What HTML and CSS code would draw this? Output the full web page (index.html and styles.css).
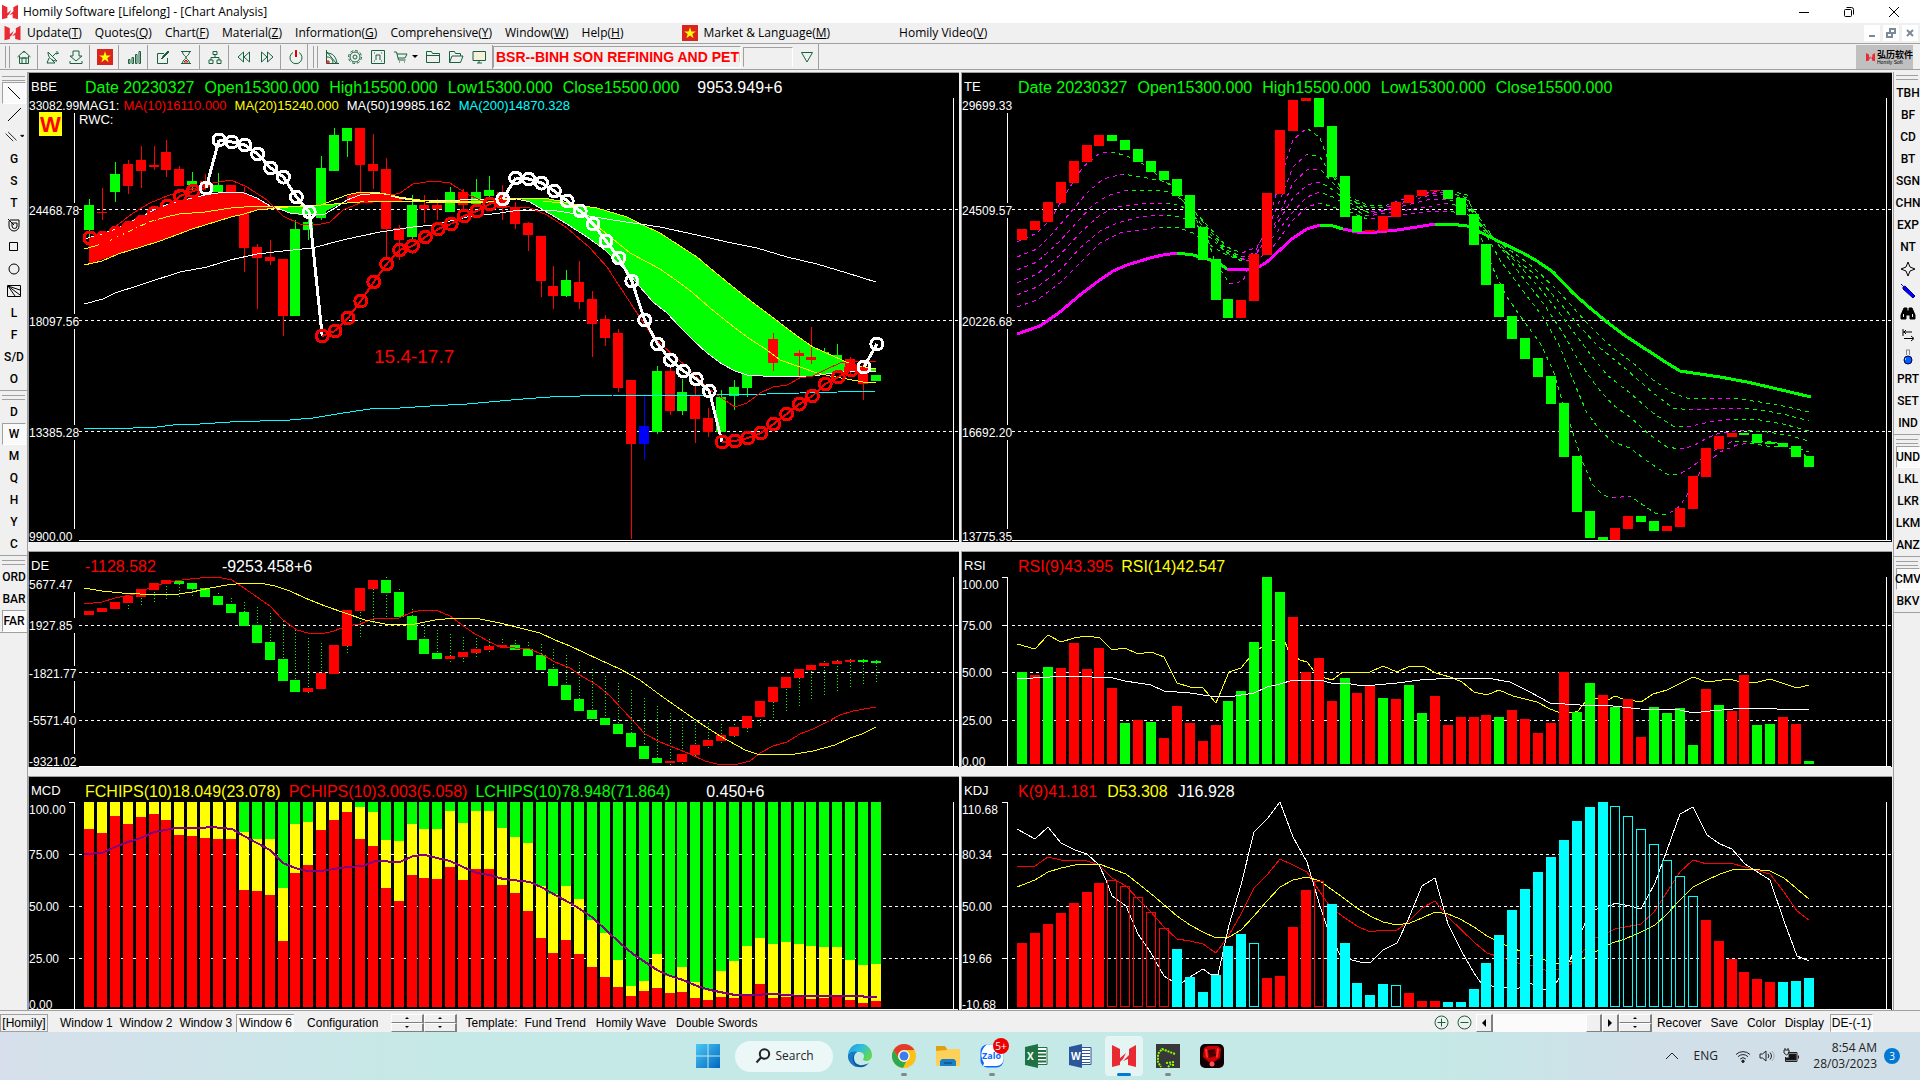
FILE: index.html
```html
<!DOCTYPE html>
<html lang="en">
<head>
<meta charset="utf-8">
<title>Homily Software [Lifelong] - [Chart Analysis]</title>
<link rel="stylesheet" href="styles.css">
</head>
<body>
<svg class="defs" aria-hidden="true">
  <symbol id="logo" viewBox="0 0 24 24"><path fill="#ea2a33" d="M0 1l8 4v9l6-5-3 6-3 3v3l-8 2zM24 1l-7 4v6l-6 6 5-2v6l8 2z"/></symbol>
  <symbol id="flag" viewBox="0 0 16 16"><path fill="#da251d" d="M0 0h16v16H0z"/><path fill="#ff0" d="M8 2.200l1.400 4.200h4.400l-3.500 2.600 1.300 4.200L8 10.600l-3.600 2.600 1.300-4.200L2.200 6.400h4.400z"/></symbol>
</svg>

<header class="titlebar">
  <svg class="title-logo"><use href="#logo"/></svg>
  <h1>Homily Software [Lifelong] - [Chart Analysis]</h1>
  <div class="win-buttons">
    <button aria-label="Minimize"><svg viewBox="0 0 12 12"><path d="M1 6.500h10"/></svg></button>
    <button aria-label="Restore"><svg viewBox="0 0 12 12"><rect x="1.500" y="3.500" width="7" height="7" rx="1"/><path d="M3.500 1.500h5a2 2 0 0 1 2 2v5"/></svg></button>
    <button aria-label="Close"><svg viewBox="0 0 12 12"><path d="M1 1l10 10M11 1L1 11"/></svg></button>
  </div>
</header>

<nav class="menubar">
  <svg class="menu-logo"><use href="#logo"/></svg>
  <button>Update(<u>T</u>)</button>
  <button>Quotes(<u>Q</u>)</button>
  <button>Chart(<u>F</u>)</button>
  <button>Material(<u>Z</u>)</button>
  <button>Information(<u>G</u>)</button>
  <button>Comprehensive(<u>Y</u>)</button>
  <button>Window(<u>W</u>)</button>
  <button>Help(<u>H</u>)</button>
  <button class="market"><svg class="flag"><use href="#flag"/></svg><span>Market &amp; Language(<u>M</u>)</span></button>
  <button class="video">Homily Video(<u>V</u>)</button>
  <div class="mdi-buttons">
    <button aria-label="Minimize chart"><svg viewBox="0 0 10 10"><path d="M2 8h6"/></svg></button>
    <button aria-label="Restore chart"><svg viewBox="0 0 10 10"><path d="M1 5h5v4H1zM4 4V1h5v4H7"/></svg></button>
    <button aria-label="Close chart"><svg viewBox="0 0 10 10"><path d="M2 2l6 6M8 2L2 8"/></svg></button>
  </div>
</nav>

<div class="toolbar">
  <div class="band">
    <i class="grip"></i>
    <button aria-label="Home"><svg viewBox="0 0 16 16"><path d="M1.500 8L8 2l6.500 6M3.500 7v7.500h9V7M6 14V9h4v5M4 9h8M8 2v2"/></svg></button>
    <i class="sep"></i>
    <button aria-label="Receive"><svg viewBox="0 0 16 16"><path d="M3 3c0 6 4 9 9 9zM7 8l4-4M12 2v3M14 4l-3 1M4 9l-2 5h8l-3-3"/></svg></button>
    <button aria-label="Download"><svg viewBox="0 0 16 16"><path d="M5 2h6v5h3l-6 5-6-5h3zM2 12v2.500h12V12"/></svg></button>
    <i class="sep"></i>
    <button aria-label="Vietnam market"><svg class="flag"><use href="#flag"/></svg></button>
    <i class="sep"></i>
    <button aria-label="Volume bars"><svg viewBox="0 0 16 16"><path d="M2.500 10.500h1.500v4H2.500zM6 8.500h1.500v6H6zM9.500 5.500H11v9H9.500zM13 2.500h1.500v12H13z"/></svg></button>
    <i class="sep"></i>
    <button aria-label="Edit"><svg viewBox="0 0 16 16"><path d="M9 4.500H2.500v10h10V9M6 10l8-8M7 10l1-3 5-5 1 1-5 5z"/></svg></button>
    <button aria-label="Wait"><svg viewBox="0 0 16 16"><path d="M3 2.500h10M3 14.500h10M4.500 3c0 3 3.500 4 3.500 5.500S4.500 11 4.500 14M11.500 3c0 3-3.500 4-3.500 5.500s3.500 2.500 3.500 5.500"/><path class="sand" d="M6 13l2-2 2 2z"/></svg></button>
    <i class="sep"></i>
    <button aria-label="Tree"><svg viewBox="0 0 16 16"><path d="M6 2.500h4v3H6zM2 11h4v3.500H2zM10 11h4v3.500h-4zM8 6v3M4 11V8.500h8V11"/></svg></button>
    <i class="sep"></i>
    <button aria-label="Back"><svg viewBox="0 0 16 16"><path d="M7.500 3L2 8l5.500 5zM13.500 3L8 8l5.500 5z"/></svg></button>
    <button aria-label="Forward"><svg viewBox="0 0 16 16"><path d="M2.500 3L8 8l-5.500 5zM8.500 3L14 8l-5.500 5z"/></svg></button>
    <i class="sep"></i>
    <button aria-label="Power"><svg viewBox="0 0 16 16"><path d="M5 3.500a6 6 0 1 0 6 0"/><path class="red" d="M8 1v7"/></svg></button>
  </div>
  <div class="band">
    <i class="grip"></i>
    <button aria-label="Fan lines"><svg viewBox="0 0 16 16"><path d="M2.500 1v13.500H15M3 4c6 0 9 4 10 10M3 8c4 0 6 3 6 6M3 3l9 11"/><path class="sand" d="M3 12h2v2H3z"/></svg></button>
    <button aria-label="Settings"><svg viewBox="0 0 16 16"><circle cx="8" cy="8" r="2"/><circle cx="8" cy="8" r="5"/><circle class="teeth" cx="8" cy="8" r="6.500"/></svg></button>
    <button aria-label="Frame"><svg viewBox="0 0 16 16"><path d="M1.500 1.500h13v13h-13zM6 11V6h4v5M4 4h1M11 4h1M4 12h1M11 12h1"/></svg></button>
    <button class="wide" aria-label="Cart"><svg viewBox="0 0 16 16"><path d="M1 3h2.500l2 8h7M4 5h10l-2 4H5M6 13h1M11 13h1"/></svg><span class="caret"></span></button>
    <button aria-label="Folder"><svg viewBox="0 0 16 16"><path d="M1.500 13.500v-11h5l1 2h7v9zM2 6.500h12"/></svg></button>
    <button aria-label="Open folder"><svg viewBox="0 0 16 16"><path d="M1.500 13.500v-11h5l1 2h5V7M1.500 13.500L4 7h11l-2.500 6.500z"/></svg></button>
    <button aria-label="Monitor"><svg viewBox="0 0 16 16"><path fill="#f6efd9" d="M2 2.500h12.500v9H2zM6 14h5M8 12v2"/></svg></button>
    <i class="sep"></i>
    <input class="symbol" aria-label="Symbol" value="BSR--BINH SON REFINING AND PETROCHEMICAL">
    <input class="code" aria-label="Code">
    <button aria-label="Choose"><svg viewBox="0 0 16 16"><path d="M2.500 3.500h11L8 13z"/></svg></button>
  </div>
  <div class="brand"><svg><use href="#logo"/></svg><span>弘历软件<small>Homily Soft</small></span></div>
</div>

<main class="workspace">
  <aside class="side left">
    <div class="group">
      <i class="hgrip"></i>
      <button class="on" aria-label="Line down"><svg viewBox="0 0 20 20"><path d="M4 4l12 12"/></svg></button>
      <button aria-label="Line up"><svg viewBox="0 0 20 20"><path d="M4 16L17 3"/></svg></button>
      <button aria-label="Parallel lines"><svg viewBox="0 0 24 20"><path d="M2 6l9 9M5 4l10 10"/><path fill="#000" d="M20 8h4l-2 2z"/></svg></button>
      <button>G</button><button>S</button><button>T</button>
      <button aria-label="Spiral"><svg viewBox="0 0 20 20"><path d="M4 4l6 6M6 5h9v6a5 5 0 0 1-10 0V6M8 8h5v3a2.500 2.500 0 0 1-5 0z"/></svg></button>
      <button aria-label="Rectangle"><svg viewBox="0 0 20 20"><path d="M5.500 5.500h8v8h-8z"/></svg></button>
      <button aria-label="Ellipse"><svg viewBox="0 0 20 20"><circle cx="10" cy="10" r="5"/></svg></button>
      <button aria-label="Gann fan"><svg viewBox="0 0 20 20"><path d="M3.500 4.500h13v11h-13zM4 5l12 4M4 5l12 9M4 5l7 10"/></svg></button>
      <button>L</button><button>F</button><button>S/D</button><button>O</button>
    </div>
    <div class="group">
      <i class="hgrip"></i>
      <button>D</button><button class="on">W</button><button>M</button><button>Q</button><button>H</button><button>Y</button><button>C</button>
    </div>
    <div class="group">
      <i class="hgrip"></i>
      <button>ORD</button><button>BAR</button><button class="on">FAR</button>
    </div>
  </aside>

  <div class="charts">
    <section class="panel">
      <svg class="plot" id="bbe" viewBox="29 73 930 469"></svg>
      <div class="head">
        <h2>BBE</h2>
        <p class="legend"><span class="g">Date 20230327</span><span class="g">Open15300.000</span><span class="g">High15500.000</span><span class="g">Low15300.000</span><span class="g">Close15500.000</span><span class="w far">9953.949+6</span></p>
        <p class="sub"><span class="name">MAG1:</span><span class="r">MA(10)16110.000</span><span class="y">MA(20)15240.000</span><span>MA(50)19985.162</span><span class="c">MA(200)14870.328</span></p>
        <p class="sub">RWC:</p>
      </div>
    </section>
    <section class="panel">
      <svg class="plot" id="te" viewBox="962 73 930 469"></svg>
      <div class="head">
        <h2>TE</h2>
        <p class="legend"><span class="g">Date 20230327</span><span class="g">Open15300.000</span><span class="g">High15500.000</span><span class="g">Low15300.000</span><span class="g">Close15500.000</span></p>
      </div>
    </section>
    <section class="panel">
      <svg class="plot" id="de" viewBox="29 552 930 215"></svg>
      <div class="head"><h2>DE</h2><p class="legend"><span class="r">-1128.582</span><span class="w apart">-9253.458+6</span></p></div>
    </section>
    <section class="panel">
      <svg class="plot" id="rsi" viewBox="962 552 930 215"></svg>
      <div class="head"><h2>RSI</h2><p class="legend tight"><span class="r">RSI(9)43.395</span><span class="y">RSI(14)42.547</span></p></div>
    </section>
    <section class="panel">
      <svg class="plot" id="mcd" viewBox="29 777 930 233"></svg>
      <div class="head"><h2>MCD</h2><p class="legend tight"><span class="y">FCHIPS(10)18.049(23.078)</span><span class="r">PCHIPS(10)3.003(5.058)</span><span class="g">LCHIPS(10)78.948(71.864)</span><span class="w wide">0.450+6</span></p></div>
    </section>
    <section class="panel">
      <svg class="plot" id="kdj" viewBox="962 777 930 233"></svg>
      <div class="head"><h2>KDJ</h2><p class="legend"><span class="r">K(9)41.181</span><span class="y">D53.308</span><span class="w">J16.928</span></p></div>
    </section>
  </div>

  <aside class="side right">
    <div class="group">
      <i class="hgrip"></i>
      <button>TBH</button><button>BF</button><button>CD</button><button>BT</button><button>SGN</button><button>CHN</button><button>EXP</button><button>NT</button>
      <button aria-label="Star"><svg viewBox="0 0 20 20"><path d="M10 3l2 5 5 2-5 2-2 5-2-5-5-2 5-2z"/></svg></button>
      <button aria-label="Pencil"><svg viewBox="0 0 20 20"><path fill="#00f" stroke="#000080" d="M5 6l2-1 10 10-2 2L5 8z"/><path stroke="#00f" d="M3 3l3 3"/></svg></button>
      <button aria-label="Find"><svg viewBox="0 0 20 20"><path fill="#000" d="M6 5h3v3h2V5h3l3 7v4h-5v-4H8v4H3v-4z"/><path stroke="#eee" d="M5.500 11v3M14.500 11v3"/></svg></button>
      <button aria-label="Swap"><svg viewBox="0 0 20 20"><path d="M5 4v7M5 7h9M8 5L6 7l2 2M6 13.500h9M13 11l3 2.500L13 16"/></svg></button>
      <button aria-label="Flask"><svg viewBox="0 0 20 20"><path stroke="#888" d="M8 3h4M8.500 3v5M11.500 3v5"/><circle cx="10" cy="13" r="4" fill="#0060ff" stroke="#004"/><path stroke="#9cf" d="M7.500 11v2"/></svg></button>
      <button>PRT</button><button>SET</button><button>IND</button>
    </div>
    <div class="group">
      <i class="hgrip"></i>
      <button class="on">UND</button><button>LKL</button><button>LKR</button><button>LKM</button><button>ANZ</button>
    </div>
    <div class="group">
      <i class="hgrip"></i>
      <button class="on">CMV</button><button>BKV</button>
    </div>
  </aside>
</main>

<footer class="status">
  <button class="boxed">[Homily]</button>
  <div class="windows">
    <button>Window 1</button><button>Window 2</button><button>Window 3</button><button class="on">Window 6</button>
  </div>
  <button class="config">Configuration</button>
  <div class="spin"><button aria-label="Up"><i class="up"></i></button><button aria-label="Down"><i class="down"></i></button></div>
  <div class="spin"><button aria-label="Up"><i class="up"></i></button><button aria-label="Down"><i class="down"></i></button></div>
  <span class="template">Template:</span>
  <div class="templates"><button>Fund Trend</button><button>Homily Wave</button><button>Double Swords</button></div>
  <div class="status-right">
    <button class="round" aria-label="Zoom in"><svg viewBox="0 0 15 15"><circle cx="7.500" cy="7.500" r="6.500"/><path d="M3.500 7.500h8M7.500 3.500v8"/></svg></button>
    <button class="round" aria-label="Zoom out"><svg viewBox="0 0 15 15"><circle cx="7.500" cy="7.500" r="6.500"/><path d="M3.500 7.500h8"/></svg></button>
    <div class="scroll">
      <button aria-label="Scroll left"><i class="prev"></i></button><div class="track"></div><div class="thumb"></div><button aria-label="Scroll right"><i class="next"></i></button>
    </div>
    <div class="spin"><button aria-label="Up"><i class="up"></i></button><button aria-label="Down"><i class="down"></i></button></div>
    <div class="actions"><button>Recover</button><button>Save</button><button>Color</button><button>Display</button></div>
    <button class="mode">DE-(-1)</button>
  </div>
</footer>

<footer class="taskbar">
  <div class="apps">
    <button class="app" aria-label="Start"><svg viewBox="0 0 24 24"><linearGradient id="win" x2="1" y2="1"><stop stop-color="#4cc8f5"/><stop offset="1" stop-color="#0067c0"/></linearGradient><path fill="url(#win)" d="M0 0h11.500v11.500H0zM12.500 0H24v11.500H12.500zM0 12.500h11.500V24H0zM12.500 12.500H24V24H12.500z"/></svg></button>
    <button class="search"><svg viewBox="0 0 16 16"><circle cx="9.500" cy="6" r="4.700"/><path d="M6 9.500L1.500 14.500"/></svg>Search</button>
    <button class="app" aria-label="Edge"><svg viewBox="0 0 24 24"><linearGradient id="edge" x2="1" y2=".6"><stop stop-color="#2196e0"/><stop offset=".5" stop-color="#30bde0"/><stop offset="1" stop-color="#62d84e"/></linearGradient><path fill="url(#edge)" d="M0 12A12 12 0 0 1 24 11c0 4-3 6-6 6-2 0-3-1-3-2 1-1 1-2 1-3 0-3-3-4-5-4C5 8 1 10 0 12z"/><path fill="#0c59a4" d="M0 12c1-4 6-5 9-4-3 2-4 6-2 10 3 4 8 4 14 1A12 12 0 0 1 0 12z"/><path fill="#1b79cc" d="M9 8c-6 3-6 11 1 15.500A12 12 0 0 1 0 12c2-4 6-5 9-4z"/></svg></button>
    <button class="app" aria-label="Chrome"><svg viewBox="0 0 24 24"><circle cx="12" cy="12" r="12" fill="#fbc116"/><path fill="#e33b2e" d="M1.600 6A12 12 0 0 1 22.400 6H12a6 6 0 0 0-5.200 9z"/><path fill="#2da94f" d="M1.600 6l5.200 9A6 6 0 0 0 14 17.700L11 24A12 12 0 0 1 1.600 6z"/><circle cx="12" cy="12" r="5.800" fill="#fff"/><circle cx="12" cy="12" r="4.500" fill="#3b7ded"/></svg><i class="dot"></i></button>
    <button class="app" aria-label="Files"><svg viewBox="0 0 24 24"><path fill="#e0a010" d="M0 2h9l2 3h13v6H0z"/><path fill="#fdd05a" d="M0 7l10-1 2-1h12v17H0z"/><path fill="#1980c8" d="M4 22v-5l2-2h12l2 2v5z"/><path fill="#0f5f9a" d="M8 18h8v2H8z"/></svg></button>
    <button class="app" aria-label="Zalo"><svg viewBox="0 0 24 24"><rect x=".5" y=".5" width="23" height="23" rx="7" fill="#0a68ff"/><path fill="#fff" d="M7 .5h10a6.500 6.500 0 0 1 6.500 6.500v8a7 7 0 0 1-7 7H8l-5 0 1-3a13 13 0 0 1 3-18.500z"/></svg><b class="zalo">Zalo</b><b class="count">5+</b><i class="dot"></i></button>
    <button class="app" aria-label="Excel"><svg viewBox="0 0 24 24"><path fill="#fff" stroke="#1f7244" d="M12 3.500h11v17H12z"/><path stroke="#1f7244" stroke-width="2" d="M14 7h8M14 10.500h8M14 14h8M14 17.500h8"/><path fill="#1f7244" d="M1 3l13-3v24L1 21z"/></svg><b class="office">X</b></button>
    <button class="app" aria-label="Word"><svg viewBox="0 0 24 24"><path fill="#fff" stroke="#2b579a" d="M12 3.500h11v17H12z"/><path stroke="#2b579a" d="M14 6.500h8M14 9.500h8M14 12.500h8M14 15.500h8M14 18.500h8"/><path fill="#2b579a" d="M1 3l13-3v24L1 21z"/></svg><b class="office">W</b></button>
    <button class="app active" aria-label="Homily"><svg><use href="#logo"/></svg><i class="dot"></i></button>
    <button class="app" aria-label="Terminal"><svg viewBox="0 0 24 24"><path fill="#383838" d="M0 0h24v24H0z"/><path class="trail" d="M19 10L6 5 2 10v8l3 5M10 19l8-1M17 20v3M12 23l3-3"/></svg><i class="dot"></i></button>
    <button class="app" aria-label="Red app"><svg viewBox="0 0 24 24"><rect width="24" height="24" rx="5" fill="#100"/><path fill="#c00" d="M4 4l4-2h10l3 3-1 9-6 4H9l-6-5z"/><path fill="#400" d="M8 6l7-1 1 7-7 2z"/><path fill="#f33" d="M5 5l2 0 1 9-2-1zM17 4l2 1-1 8-2 1z"/><circle cx="12" cy="20" r="2.500" fill="#f55"/></svg></button>
  </div>
  <div class="tray">
    <button aria-label="Hidden icons"><svg viewBox="0 0 16 16"><path d="M2 11l6-6 6 6"/></svg></button>
    <button class="lang">ENG</button>
    <button aria-label="Network and battery" class="net">
      <svg viewBox="0 0 16 16"><path d="M1 6.500a10 10 0 0 1 14 0M3 8.700a7 7 0 0 1 10 0M5.200 11a4 4 0 0 1 5.600 0"/><circle cx="8" cy="13.300" r="1.200" fill="#222"/></svg>
      <svg viewBox="0 0 16 16"><path d="M1 6v4h2.500L7 13V3L3.500 6zM9 6a3 3 0 0 1 0 4M11 4.500a5 5 0 0 1 0 7"/><path stroke="#aaa" d="M13 3a7 7 0 0 1 0 10"/></svg>
      <svg viewBox="0 0 16 16"><path fill="#111" d="M6 6h7v6H3v-2h3z"/><path d="M5 4.500h9v9H2.500V9M15.500 7.500v3M1 2h5v3l-2.500 2L1 5zM2 0v2M5 0v2"/></svg>
    </button>
    <time class="clock" datetime="2023-03-28T08:54">8:54 AM<br>28/03/2023</time>
    <b class="notify">3</b>
  </div>
</footer>
<script src="charts.js"></script>
</body>
</html>
```
FILE: styles.css
```css
* { box-sizing: border-box; }
html, body { height: 100%; margin: 0; }
body {
  display: flex;
  flex-direction: column;
  overflow: hidden;
  background: #f0f0f0;
  color: #000;
  font: 12px/16px "Liberation Sans", Arial, sans-serif;
}
h1, h2, p { margin: 0; font-weight: normal; font-size: inherit; }
button { margin: 0; padding: 0; border: 0; background: none; color: inherit; font: inherit; white-space: nowrap; }
button svg { display: block; fill: none; stroke: #000; }
.defs { display: none; }

/* title and menu */
.titlebar { display: flex; align-items: center; flex: none; height: 23px; padding: 0 2px; background: #fff; font: 12px/16px "Open Sans", "Noto Sans", sans-serif; }
.title-logo { width: 16px; height: 16px; margin-right: 5px; }
.win-buttons { display: flex; gap: 33px; margin-left: auto; padding-right: 18px; }
.win-buttons svg { width: 12px; height: 12px; }
.menubar { display: flex; align-items: center; gap: 13px; flex: none; height: 21px; padding: 0 2px; border-bottom: 1px solid #a0a0a0; font: 12px/16px "Open Sans", "Noto Sans", sans-serif; }
.menu-logo { width: 17px; height: 16px; margin: 0 -7px 0 2px; }
.market { display: flex; gap: 5px; margin-left: 46px; }
button .flag, .flag { width: 16px; height: 16px; stroke: none; }
.video { margin-left: 56px; }
.mdi-buttons { display: flex; gap: 3px; margin-left: auto; }
.mdi-buttons button { padding: 3px; background: #fff; }
.mdi-buttons svg { width: 10px; height: 10px; stroke: #7a8a99; stroke-width: 2; }

/* icon toolbar */
.toolbar { display: flex; flex: none; height: 26px; margin-bottom: 2px; border-bottom: 1px solid #a0a0a0; }
.band { display: flex; align-items: center; padding-left: 5px; border-right: 1px solid #a0a0a0; }
.grip { flex: none; width: 5px; height: 22px; margin-right: 2px; border: solid #a0a0a0; border-width: 0 1px; }
.band button { display: flex; align-items: center; justify-content: center; width: 23px; height: 22px; }
.band button.wide { width: 32px; gap: 3px; }
.band svg { width: 16px; height: 16px; stroke: #17623c; }
.band .flag { stroke: none; }
.band .red { stroke: #d00; stroke-width: 2; }
.band .sand { stroke: #d00; }
.band .teeth { stroke-dasharray: 3 2; }
.sep { width: 6px; height: 24px; background: linear-gradient(#a0a0a0, #a0a0a0) 2px 0 / 1px 100% no-repeat; }
.caret { border: 3px solid transparent; border-top-color: #000; border-bottom: 0; }
.symbol { width: 248px; height: 22px; padding: 0 0 0 2px; border: 1px solid #a0a0a0; border-right-color: #fff; border-bottom-color: #fff; background: #f0f0f0; color: #f00; font: bold 14px/18px "Liberation Sans", Arial, sans-serif; margin-left: -3px; }
.code { width: 50px; height: 20px; margin: 0 2px 0 2px; border: 1px solid #a0a0a0; border-right-color: #fff; border-bottom-color: #f0f0f0; background: #f0f0f0; }
.brand { display: flex; align-items: center; gap: 2px; width: 57px; height: 24px; margin: 1px 7px 0 auto; padding-left: 10px; background: #c0c0c0; overflow: hidden; }
.brand svg { flex: none; width: 9px; height: 12px; }
.brand span { display: grid; font: bold 9px/10px "Noto Sans CJK SC", sans-serif; white-space: nowrap; }
.brand small { font: 5px/5px "Liberation Sans", Arial, sans-serif; }

/* workspace */
.workspace { display: grid; grid-template-columns: 28px minmax(0, 1fr) 27px; flex: 1; min-height: 0; }
.side { border: solid #a0a0a0; border-width: 0 1px 0 0; font: 500 12px/16px "Roboto", "Liberation Sans", sans-serif; }
.side.right { border-width: 0 0 0 1px; }
.group { padding: 4px 2px 0; border-bottom: 1px solid #a0a0a0; }
.right .group:first-child { padding-top: 3px; }
.hgrip { display: block; height: 5px; margin-bottom: 1px; border: solid #a0a0a0; border-width: 1px 0; }
.right .hgrip { margin-bottom: 2px; }
.side button { display: flex; align-items: center; justify-content: center; width: 24px; height: 22px; font-size: 12px; }
.side button.on { border: 1px solid #a0a0a0; border-right-color: #fff; border-bottom-color: #fff; background: #fafafa; }
.side svg { width: 20px; height: 20px; }
.charts {
  display: grid;
  grid-template-columns: repeat(2, minmax(0, 1fr));
  grid-template-rows: 470fr 216fr 234fr;
  gap: 9px 2px;
  min-height: 0;
  padding-right: 1px;
}
.panel { display: grid; min-height: 0; border: solid #a0a0a0; border-width: 1px 0 0 1px; background: #000; overflow: hidden; }
.panel > * { grid-area: 1 / 1; min-width: 0; min-height: 0; }
.plot { display: block; width: 100%; height: 100%; shape-rendering: crispEdges; }
.plot text { font: 12px "Liberation Sans", Arial, sans-serif; fill: #fff; }
.plot .note { font-size: 19px; fill: #f00; }
.plot .badge { font-size: 22px; font-weight: bold; fill: #f00; }
.head { display: grid; grid-template-columns: 54px 1fr; align-content: start; padding: 6px 0 0 2px; color: #fff; white-space: nowrap; }
.head h2 { font-size: 13px; line-height: 16px; }
.legend { display: flex; gap: 10px; font-size: 16px; line-height: 18px; }
.legend.tight { gap: 8px; }
.legend .far { margin-left: 8px; }
.legend .apart { margin-left: 56px; }
.legend .wide { margin-left: 28px; }
.sub { display: flex; grid-column: 1 / 3; gap: 8px; margin-left: 48px; padding-top: 2px; font-size: 13px; line-height: 14px; }
.sub .name { margin-right: -4px; }
.sub + .sub { padding-top: 0; }
.g { color: #0f0; } .r { color: #f00; } .y { color: #ff0; } .c { color: #0ff; } .w { color: #fff; }

/* status bar */
.status { display: flex; align-items: center; flex: none; height: 22px; padding-top: 2px; border-top: 1px solid #a0a0a0; }
.boxed { width: 48px; height: 18px; border: 1px solid #a0a0a0; }
.windows { display: flex; gap: 7px; margin-left: 12px; }
.windows .on { width: 58px; margin: -1px 0 -1px -3px; border: solid #a0a0a0; border-width: 1px 0 0 1px; background: #fafafa; }
.config { margin: 0 13px 0 13px; }
.spin { display: grid; width: 33px; height: 18px; }
.spin button, .scroll button, .thumb { display: grid; place-items: center; border: solid; border-color: #fff #808080 #808080 #fff; border-width: 1px 2px 1px 1px; background: #f0f0f0; }
.spin .up { border: 2px solid transparent; border-top: 0; border-bottom-color: #000; }
.spin .down { border: 2px solid transparent; border-bottom: 0; border-top-color: #000; }
.scroll .prev { border: 4px solid transparent; border-left: 0; border-right-color: #000; }
.scroll .next { border: 4px solid transparent; border-right: 0; border-left-color: #000; }
.template { margin: 0 7px 0 8px; }
.templates { display: flex; gap: 10px; }
.status-right { display: flex; align-items: center; margin-left: auto; padding-right: 47px; }
.round { margin-right: 8px; }
.round svg { width: 15px; height: 15px; stroke: #17623c; }
.scroll { display: flex; width: 143px; height: 18px; margin-left: -4px; }
.scroll button { width: 17px; }
.track { flex: 1; background: #fbfbfb; }
.thumb { width: 16px; }
.actions { display: flex; gap: 9px; margin: 0 6px 0 5px; }
.mode { width: 43px; height: 18px; border: 1px solid #a0a0a0; border-right-color: #fff; border-bottom-color: #fff; background: #f8f8f8; }

/* taskbar */
.taskbar {
  display: grid;
  grid-template-columns: 1fr auto 1fr;
  flex: none;
  height: 48px;
  background: linear-gradient(90deg, #d6dfeb 0, #c4e9e6 24%, #c4e9e6 74%, #d1dfe9 86%, #d1dfe9 100%);
  font: 12px/16px "Open Sans", "Noto Sans", sans-serif;
}
.apps { grid-column: 2; display: flex; align-items: center; gap: 6px; }
.app { position: relative; display: grid; place-items: center; width: 38px; height: 40px; border-radius: 4px; }
.app svg { width: 24px; height: 24px; stroke: none; }
.app .trail { fill: none; stroke: #8f0; stroke-width: 2; stroke-dasharray: 2 1; }
.app.active { background: #e4f5f3; }
.dot { position: absolute; left: 16px; bottom: 0; width: 6px; height: 3px; border-radius: 2px; background: #7a8a8a; }
.active .dot { left: 12px; width: 14px; background: #0078d4; }
.search { display: flex; align-items: center; justify-content: center; gap: 5px; width: 98px; height: 31px; margin: 0 2px; border-radius: 16px; background: #ecf8f7; color: #222; }
.search svg { width: 16px; height: 16px; stroke: #222; stroke-width: 2; }
.zalo { position: absolute; left: 9px; top: 13px; color: #0a68ff; font: bold 9px/14px "Open Sans", sans-serif; }
.office { position: absolute; left: 10px; top: 12px; color: #fff; font: bold 10px/16px "Open Sans", sans-serif; }
.count { position: absolute; right: 2px; top: 2px; width: 16px; height: 16px; border-radius: 8px; background: #e00; color: #fff; font: 10px/16px "Open Sans", sans-serif; }
.tray { display: flex; align-items: center; justify-content: flex-end; padding-right: 20px; color: #222; }
.tray svg { width: 16px; height: 16px; stroke: #222; }
.lang { margin: 0 17px 0 14px; }
.net { display: flex; gap: 8px; margin-right: 6px; }
.clock { width: 72px; text-align: right; }
.notify { width: 16px; height: 16px; margin-left: 7px; border-radius: 8px; background: #0078d4; color: #fff; font: 10px/16px "Open Sans", sans-serif; text-align: center; }
```
FILE: charts.js
```js
const NS = 'http://www.w3.org/2000/svg';
const COLORS = { r: '#f00', g: '#0f0', b: '#00f', y: '#ff0', w: '#fff', c: '#0ff', m: '#f0f', p: '#800080' };
const STEP = 12.9;
const LEFT = 84;
const RIGHT = 1017;

function add(svg, tag, attrs, text) {
  const el = document.createElementNS(NS, tag);
  for (const key in attrs) el.setAttribute(key, attrs[key]);
  if (text) el.textContent = text;
  svg.appendChild(el);
  return el;
}
const barX = (origin, i) => origin + Math.round(i * STEP);

function rect(svg, x, y, w, h, fill) {
  add(svg, 'rect', { x, y, width: w, height: Math.max(h, 1), fill });
}
function line(svg, points, color, width = 1, extra = {}) {
  add(svg, 'polyline', { points, fill: 'none', stroke: COLORS[color] || color, 'stroke-width': width, ...extra });
}

// Price grid, value axis and its labels.
function frame(svg, o) {
  const x = o.x;
  for (const y of o.grid) line(svg, `${x + 5},${y} ${x + 884},${y}`, 'w', 1, { 'stroke-dasharray': '3 3' });
  line(svg, `${x + .5},${o.top} ${x + .5},${o.end}`, 'w');
  line(svg, `${x + 879.5},${o.right} ${x + 879.5},${o.bottom}`, 'w');
  line(svg, `${o.ticks ? x - 45 : x + 5},${o.bottom - .5} ${x + 884},${o.bottom - .5}`, 'w');
  if (o.ticks) for (const y of [o.right + .5, ...o.grid]) line(svg, `${x - 5},${y} ${x + 1},${y}`, 'w');
  for (const [label, y] of o.labels) {
    if (o.gaps) rect(svg, x - 1, y - 12, 4, 15, '#000');
    add(svg, 'text', { x: x - 45, y }, label);
  }
}

// "r229-240" -> coloured box for each period.
function boxes(svg, origin, data) {
  data.split(' ').forEach((s, i) => {
    const [a, b] = s.slice(1).split('-').map(Number);
    rect(svg, barX(origin, i), a, 10, b - a, COLORS[s[0]]);
  });
}

/* BBE */
{
  const s = document.getElementById('bbe');
  frame(s, { x: 74, top: 113, end: 530, right: 98, bottom: 541, gaps: true, grid: [209.5, 320.5, 431.5],
    labels: [['33082.99', 110], ['24468.78', 215], ['18097.56', 326], ['13385.28', 437], ['9900.00', 541]] });
  const candles = 'g205-230/199-237 r212-213/188-220 g174-192/162-202 r164-186/160-194 r160-171/146-188 r165-167/146-170 r152-170/140-177 r169-186/166-186 g181-185/172-190 r181-187/174-190 g185-192/173-192 r185-210/185-210 r200-248/187-272 r247-258/244-309 r257-261/240-265 r259-316/259-336 g229-316/220-316 g222-230/216-240 g168-218/156-220 g135-171/128-171 g128-141/128-157 r128-165/128-192 r164-171/134-189 r169-229/158-260 r228-240/225-260 g205-237/195-240 r205-209/195-223 r205-209/199-220 g192-212/187-212 r192-205/189-212 g192-204/179-207 g190-196/176-197 r192-208/185-220 r207-224/202-229 r223-235/222-251 r236-281/236-297 r286-296/266-309 g280-296/270-297 r282-302/261-309 r299-324/291-357 r319-338/315-346 r333-388/329-392 r380-444/380-539 b426-444/396-460 g371-432/366-434 r371-411/368-415 g392-411/379-415 r396-419/385-443 r418-432/408-437 g397-432/390-432 g387-396/380-410 g373-388/373-397 g350-375/350-375 r339-363/333-371 g350-372/350-372 r353-356/350-379 r357-360/327-364 g352-372/348-372 g355-372/344-372 r359-372/357-375 r367-384/360-400 g375-381/375-381'.split(' ');
  const candle = (c, i) => {
    const [body, wick] = c.slice(1).split('/').map(t => t.split('-').map(Number));
    rect(s, barX(LEFT, i), body[0], 10, body[1] - body[0], COLORS[c[0]]);
    rect(s, barX(LEFT, i) + 5, wick[0], 1, wick[1] - wick[0], COLORS[c[0]]);
  };
  candles.forEach(candle);
  const fill = (points, color) => add(s, 'polygon', { points, fill: COLORS[color] });
  fill('89,238 102,234 118,228 141,217 166,205 192,198 218,193 231,192 244,193 257,198 270,206 277,208 257,210 244,214 218,221 192,229 160,241 118,254 89,264', 'r');
  fill('277,207 300,206 321,205 340,204 328,210 321,214 300,215 290,213', 'g');
  fill('347,203 347,196 360,192 373,192 386,194 405,199 399,202', 'r');
  const top = '517,198 543,198 560,201 577,205 597,208 617,214 627,217 643,225 660,233 680,246 697,257 710,268 727,282 747,298 763,310 780,323 797,336 813,347 833,356 853,365 876,369';
  fill(top + ' 876,371 857,371 840,372 813,376 787,377 763,376 747,375 735,371 722,364 707,353 693,340 680,327 667,313 653,302 640,287 630,275 617,262 605,250 587,237 570,226 557,218 543,210 530,202', 'g');
  [53, 55, 56, 59, 60].forEach(i => candle(candles[i], i));
  line(s, '84,239 102,234 118,228 128,223 141,217 154,210 166,205 179,201 192,198 205,195 218,193 231,192 244,193 257,198 270,206 277,208 290,213 308,215 325,214 335,208 347,200 360,195 380,193 399,198 412,200 460,200 517,199 530,202 543,210 557,218 570,226 587,237 605,250 617,262 630,275 640,287 653,302 667,313 680,327 693,340 707,353 722,364 735,371 747,375 763,376 787,377 813,376 840,372 857,371 876,371', 'w');
  line(s, '84,265 102,261 118,254 141,247 160,241 179,234 192,229 205,225 218,221 231,217 244,214 257,210 277,208 300,206 321,205 347,203 373,201 399,201 425,202 460,203 490,202 504,198 ' + top, 'y');
  line(s, '84,249 102,244 115,238 149,222 166,217 179,214 205,212 231,208 257,206 275,206 295,207 321,205 334,200 347,195 360,192 373,192 386,194 399,197 412,199 437,202 500,201 543,201 560,203 580,210 597,226 613,239 630,253 647,262 660,269 680,283 693,293 710,308 730,324 750,339 767,350 780,360 800,367 817,373 830,376 847,379 863,382 876,382', 'y');
  line(s, '84,304 103,299 115,293 140,285 180,272 207,267 230,260 257,254 283,251 312,248 347,239 380,232 413,227 433,225 467,217 500,213 513,211 533,210 557,211 583,215 613,220 633,223 660,227 697,235 727,242 757,248 787,257 817,264 847,273 876,282', 'w');
  line(s, '84,428 133,428 157,427 173,425 200,424 230,422 290,420 313,418 343,413 370,409 400,408 430,406 467,404 500,401 523,399 550,397 580,396 613,395 713,395 767,394 800,393 876,391', 'c');
  line(s, '115,227 133,213 150,203 167,196 183,191 200,187 213,183 231,180 247,187 267,200 283,216 300,224 317,225 330,222 343,210 360,203 387,196 400,193 413,184 433,181 450,183 467,194 480,200 500,205 510,207 528,207 547,215 567,228 590,248 607,267 620,287 637,313 653,337 673,355 687,367 710,390 735,407 747,403 760,393 773,387 787,385 800,378 813,376 827,369 840,363 853,361 876,361', 'r');
  const sar = [238, 238, 233, 228, 222, 213, 206, 196, 191, 188, 140, 142, 145, 154, 168, 177, 197, 212, 336, 331, 318, 301, 282, 264, 250, 246, 237, 229, 224, 216, 211, 204, 199, 178, 179, 183, 191, 201, 211, 224, 241, 258, 281, 320, 344, 360, 371, 379, 391, 442, 441, 438, 433, 424, 414, 404, 396, 384, 377, 370, 367, 344];
  const isWhite = i => (i >= 9 && i <= 17) || (i >= 32 && i <= 48) || i >= 60;
  sar.forEach((y, i) => {
    const x = 90 + i * STEP;
    const color = isWhite(i) ? 'w' : 'r';
    if (i < 61) line(s, `${x},${y} ${x + STEP},${sar[i + 1]}`, color, color === 'w' ? 3 : 2);
    add(s, 'circle', { cx: x, cy: y, r: 6, fill: 'none', stroke: COLORS[color], 'stroke-width': 3 });
  });
  rect(s, 39, 112, 23, 24, '#ff0');
  add(s, 'text', { x: 40, y: 132, class: 'badge' }, 'W');
  add(s, 'text', { x: 374, y: 363, class: 'note' }, '15.4-17.7');
}

/* TE */
{
  const s = document.getElementById('te');
  frame(s, { x: 1007, top: 113, end: 530, right: 98, bottom: 541, gaps: true, grid: [209.5, 320.5, 431.5],
    labels: [['29699.33', 110], ['24509.57', 215], ['20226.68', 326], ['16692.20', 437], ['13775.35', 541]] });
  const averages = [
    '1017,242 1037,233 1050,220 1070,187 1083,167 1100,153 1112,152 1127,156 1143,164 1160,177 1173,188 1190,210 1207,237 1215,262 1230,284 1243,281 1253,257 1267,227 1280,180 1293,140 1307,128 1320,138 1327,157 1340,187 1353,200 1370,214 1387,210 1407,200 1427,193 1447,190 1467,195 1480,235 1495,273 1507,297 1523,320 1540,343 1553,370 1562,400 1572,430 1583,463 1593,485 1603,495 1613,498 1630,496 1643,505 1655,513 1667,515 1680,506 1690,490 1703,467 1720,452 1737,445 1750,443 1767,446 1783,446 1800,452 1809,458',
    '1017,257 1037,249 1053,233 1070,213 1087,193 1103,179 1123,174 1147,178 1167,182 1180,193 1193,210 1207,225 1227,247 1242,253 1257,247 1267,230 1280,200 1293,167 1307,154 1320,157 1333,177 1350,197 1367,205 1387,205 1407,198 1427,194 1447,192 1467,198 1480,223 1500,260 1520,287 1543,317 1560,347 1573,380 1587,413 1600,430 1613,442 1630,448 1650,463 1667,474 1680,474 1693,466 1707,455 1720,447 1733,441 1750,441 1773,442 1793,447 1809,452',
    '1017,270 1037,262 1060,241 1077,222 1093,205 1107,196 1127,190 1150,190 1170,192 1187,203 1207,227 1227,250 1242,257 1257,252 1270,233 1280,213 1293,183 1307,170 1320,169 1333,183 1350,200 1367,207 1387,207 1407,202 1427,196 1447,194 1467,200 1483,223 1517,270 1543,303 1563,333 1580,363 1597,387 1613,405 1630,417 1650,435 1667,447 1680,449 1693,446 1707,438 1720,433 1743,430 1767,432 1787,435 1809,441',
    '1017,283 1037,274 1060,255 1080,233 1100,215 1117,207 1140,204 1167,203 1180,205 1193,215 1213,237 1227,252 1242,259 1257,253 1273,230 1293,198 1307,185 1320,182 1333,190 1350,203 1367,212 1387,210 1427,200 1447,199 1467,205 1483,227 1517,263 1543,292 1567,323 1587,350 1607,375 1630,393 1653,413 1673,426 1687,427 1710,422 1733,419 1760,420 1783,424 1809,431',
    '1017,295 1037,287 1060,270 1080,248 1100,231 1117,223 1140,217 1163,215 1180,217 1193,222 1213,240 1227,253 1242,260 1257,257 1273,237 1293,212 1307,197 1320,192 1333,197 1350,207 1367,216 1387,213 1427,207 1447,203 1467,208 1500,247 1533,273 1560,303 1580,327 1600,348 1627,370 1653,393 1673,408 1690,410 1713,409 1743,408 1767,411 1787,415 1809,421',
    '1017,307 1037,300 1060,283 1080,263 1100,243 1120,233 1140,230 1160,227 1177,227 1193,233 1213,247 1227,255 1242,261 1257,260 1273,247 1293,220 1307,207 1320,203 1333,207 1350,212 1367,219 1387,217 1427,212 1447,211 1467,214 1500,243 1533,267 1560,293 1587,323 1607,343 1633,363 1653,380 1673,393 1687,398 1710,399 1733,398 1760,402 1783,406 1809,412'
  ];
  for (const avg of averages) {
    const pts = avg.split(' ').map(p => p.split(',').map(Number));
    let travelled = 0;
    for (let i = 1; i < pts.length; i++) {
      const color = pts[i][1] < pts[i - 1][1] ? 'm' : 'g';
      line(s, `${pts[i - 1]} ${pts[i]}`, color, 1, { 'stroke-dasharray': '4 4', 'stroke-dashoffset': travelled });
      travelled += Math.hypot(pts[i][0] - pts[i - 1][0], pts[i][1] - pts[i - 1][1]);
    }
  }
  line(s, '1017,334 1040,326 1060,312 1080,295 1097,282 1113,271 1127,265 1150,258 1163,255 1177,253', 'm', 3);
  line(s, '1177,253 1193,255 1207,259 1217,262 1227,269', 'g', 3);
  line(s, '1227,269 1242,270 1257,268 1267,262 1280,250 1293,238 1307,229 1320,225', 'm', 3);
  line(s, '1320,225 1333,226 1343,229', 'g', 3);
  line(s, '1343,229 1357,232 1377,232 1397,230 1417,227 1435,224', 'm', 3);
  line(s, '1435,224 1450,224 1467,226 1480,232 1500,242 1523,253 1537,261 1553,272 1573,293 1590,308 1607,322 1627,337 1647,350 1667,363 1680,371 1693,373 1720,377 1747,382 1773,388 1811,397', 'g', 3);
  boxes(s, RIGHT, 'r229-240 r221-230 r202-222 r182-203 r161-183 r145-162 r135-146 g135-141 g140-150 g149-162 g161-172 g171-180 g179-196 g195-228 g227-260 g259-300 g299-318 r300-318 r254-301 r193-255 r130-194 r100-131 r98-101 g98-127 g126-177 g176-217 g216-232 r230-232 r216-231 r202-217 r195-203 r190-196 r190-191 g190-199 g198-215 g214-245 g244-285 g284-317 g316-339 g338-359 g358-377 g376-404 g403-457 g456-512 g511-538 g537-540 r528-540 r516-529 g516-522 g521-531 r526-531 r508-527 r476-509 r448-477 r436-449 r433-437 g433-435 g434-443 g442-444 g443-447 g446-457 g456-467');
}

/* DE */
{
  const s = document.getElementById('de');
  frame(s, { x: 74, top: 592, end: 755, right: 577, bottom: 767, gaps: true, grid: [625.5, 672.5, 720.5],
    labels: [['5677.47', 589], ['1927.85', 630], ['-1821.77', 678], ['-5571.40', 725], ['-9321.02', 766]] });
  '611-617 608-614 602-611 596-609 589-607 583-604 580-601 581-598 583-597 588-597 593-605 598-613 602-626 607-643 613-660 621-660 630-692 638-694 643-690 645-674 610-655 588-638 580-626 577-619 589-617 609-640 624-654 630-659 634-664 637-662 638-657 639-652 639-647 640-650 642-656 644-670 649-686 655-700 662-711 669-719 676-725 683-734 690-747 698-759 706-763 713-765 718-764 722-757 723-750 724-744 724-739 716-733 701-727 687-720 677-713 669-707 665-701 661-696 660-692 659-688 659-685 660-683'.split(' ').forEach((w, i) => {
    const [a, b] = w.split('-');
    const x = barX(LEFT, i) + 5.5;
    line(s, `${x},${a} ${x},${b}`, 'g', 1, { 'stroke-dasharray': '1 2' });
  });
  boxes(s, LEFT, 'r611-615 r608-612 r602-609 r596-603 r589-597 r583-590 r580-584 g581-584 g583-589 g588-597 g596-605 g604-613 g612-626 g625-643 g642-660 g659-681 g680-692 r688-692 r673-689 r645-674 r610-646 r588-611 r580-589 g580-593 g592-617 g616-640 g639-654 g653-659 r656-659 r652-657 r649-653 r646-650 r645-647 g645-650 g649-656 g655-670 g669-686 g685-700 g699-711 g710-719 g718-725 g724-734 g733-747 g746-759 g758-763 r761-763 r754-762 r745-755 r740-746 r735-741 r727-736 r716-728 r701-717 r687-702 r677-688 r669-678 r665-670 r663-666 r661-664 r660-662 g660-662 g661-663');
  line(s, '84,604 102,602 115,598 135,594 154,586 175,581 190,579 205,577.5 220,577.5 232,580 244,588 257,597 270,606 283,620 297,630 308,633 321,634 334,631 347,626 360,624 373,619 386,618 399,618 412,612 425,610 438,611 450,616 462,625 475,634 490,642 500,647 515,648 530,649 543,655 555,662 570,668 583,677 597,685 610,696 623,710 635,723 645,734 660,742 675,748 690,754 705,761 717,764 738,764 750,761 760,753 773,746 787,742 800,734 813,729 827,722 840,715 853,711 876,707', 'r');
  line(s, '84,588 102,591 122,593 140,594 172,595 192,592 210,588 227,585 245,583 260,583 275,586 290,591 305,598 325,606 345,613 365,620 385,624 400,625 415,624 435,620 455,618 480,619 500,623 520,628 540,633 555,640 570,646 585,653 600,660 620,669 640,680 660,695 680,709 700,723 720,736 745,750 757,754 775,755 795,754 813,751 835,745 850,738 862,734 876,727', 'y');
}

/* RSI */
{
  const s = document.getElementById('rsi');
  frame(s, { x: 1007, top: 577, end: 767, right: 577, bottom: 767, ticks: true, grid: [625.5, 672.5, 720.5],
    labels: [['100.00', 589], ['75.00', 630], ['50.00', 677], ['25.00', 725], ['0.00', 766]] });
  line(s, '1017,644 1035,649 1048,635 1061,642 1074,638 1087,636 1100,638 1112,650 1125,648 1138,654 1151,652 1164,657 1177,683 1190,687 1203,688 1216,703 1229,672 1241,668 1254,652 1262,647 1272,640 1285,642 1289,652 1300,660 1307,662 1314,671 1325,678 1332,680 1343,672 1370,672 1383,666 1397,672 1408,667 1423,666 1436,673 1450,677 1462,682 1474,692 1487,695 1499,690 1513,696 1537,702 1550,709 1558,712 1573,713 1578,711 1587,700 1597,698 1608,700 1615,696 1623,699 1641,702 1653,694 1667,690 1693,677 1707,682 1730,679 1740,682 1758,682 1770,679 1797,688 1809,685', 'y');
  'g672 r675 g667 r668 r643 r669 r648 r688 g723 r720 g722 r738 r706 r723 r741 r725 g701 g691 g642 g577 g592 r617 r672 r658 r701 g678 r693 r686 g698 r699 g685 g713 r696 r725 r717 r717 r715 g717 r710 r719 r733 r723 r672 g712 g683 r695 g707 r699 r737 g707 g713 g708 g745 r689 g705 r711 r675 g725 g724 r717 r724 g761'.split(' ').forEach((b, i) => {
    const y = Number(b.slice(1));
    rect(s, barX(RIGHT, i), y, 10, 764 - y, COLORS[b[0]]);
  });
  line(s, '1017,679 1050,677 1070,676 1113,678 1125,681 1151,685 1164,691 1190,693 1210,696 1235,696 1254,693 1267,687 1280,684 1293,680 1320,680 1331,683 1345,683 1357,685 1375,685 1397,683 1420,680 1436,679 1450,678 1487,678 1510,682 1530,692 1550,703 1580,705 1613,706 1640,709 1680,710 1693,713 1710,711 1745,708 1809,710', 'w');
}

/* MCD */
{
  const s = document.getElementById('mcd');
  frame(s, { x: 74, top: 802, end: 1010, right: 802, bottom: 1010, ticks: true, grid: [854.5, 906.5, 958.5],
    labels: [['100.00', 814], ['75.00', 859], ['50.00', 911], ['25.00', 963], ['0.00', 1009]] });
  '802-829 802-833 802-816 802-824 802-817 802-814 802-820 802-835 802-836 802-838 802-839 802-839 832-890 839-891 839-895 888-941 824-873 822-865 802-830 802-820 802-812 807-839 812-846 840-888 841-901 824-875 829-878 829-879 811-867 823-880 811-869 811-869 828-885 837-893 843-911 886-938 894-953 886-940 899-954 920-967 933-977 960-987 986-996 981-991 954-988 976-993 967-992 982-998 990-1000 971-997 961-998 946-996 938-984 944-998 942-997 944-996 946-999 947-998 947-996 960-1000 965-1003 964-1001'.split(' ').forEach((b, i) => {
    const [yellow, red] = b.split('-').map(Number);
    const x = barX(LEFT, i);
    rect(s, x, 802, 10, 205, COLORS.g);
    rect(s, x, yellow, 10, 1007 - yellow, COLORS.y);
    rect(s, x, red, 10, 1007 - red, COLORS.r);
  });
  line(s, '84,854 102,853 115,847 128,842 141,838 154,832 166,830 175,828 200,828 212,827 232,829 244,836 257,843 270,850 283,863 295,868 307,871 321,871 334,869 347,867 363,866 375,861 400,862 413,856 425,855 437,858 450,861 463,867 477,873 490,875 503,879 530,882 543,888 557,896 570,903 580,909 593,918 607,931 620,943 633,954 645,962 657,970 670,976 683,980 697,986 710,990 735,995 760,995 765,994 775,994 800,996 860,996 867,997 877,997', 'p', 2);
}

/* KDJ */
{
  const s = document.getElementById('kdj');
  frame(s, { x: 1007, top: 802, end: 1010, right: 802, bottom: 1010, ticks: true, grid: [854.5, 906.5, 958.5],
    labels: [['110.68', 814], ['80.34', 859], ['50.00', 911], ['19.66', 963], ['-10.68', 1009]] });
  line(s, '1017,867 1035,866 1048,857 1061,860 1087,861 1099,865 1112,878 1126,886 1138,899 1151,912 1164,927 1177,939 1190,941 1203,944 1216,953 1229,935 1241,914 1254,888 1267,875 1280,859 1293,865 1307,872 1320,892 1331,908 1345,918 1357,926 1370,932 1383,930 1397,930 1408,922 1422,908 1435,901 1448,917 1475,943 1487,953 1500,957 1518,963 1535,966 1548,971 1565,969 1580,955 1593,939 1607,933 1615,929 1641,924 1654,912 1667,892 1680,872 1693,860 1707,864 1730,863 1745,867 1770,874 1784,892 1797,911 1809,920', 'r');
  line(s, '1017,887 1035,880 1048,872 1061,868 1075,865 1099,864 1126,874 1140,885 1155,897 1177,916 1190,925 1203,932 1216,938 1229,937 1241,930 1254,916 1267,901 1280,887 1293,880 1307,877 1320,881 1331,889 1345,899 1357,908 1370,916 1383,922 1397,925 1410,923 1422,918 1435,912 1448,914 1460,919 1474,927 1487,936 1505,945 1530,955 1545,960 1557,964 1580,960 1595,952 1612,943 1625,939 1641,932 1655,925 1667,914 1680,900 1693,887 1707,880 1720,874 1732,870 1750,869 1770,871 1784,878 1809,899', 'y');
  line(s, '1017,829 1035,839 1048,827 1061,843 1075,850 1087,854 1099,865 1106,880 1112,896 1126,906 1138,934 1151,953 1164,976 1172,981 1182,983 1190,977 1203,969 1210,974 1218,975 1229,925 1241,885 1254,832 1267,819 1280,802 1293,837 1307,862 1320,906 1327,927 1340,955 1352,960 1360,962 1370,963 1383,950 1397,943 1408,920 1422,886 1435,878 1448,924 1462,952 1474,973 1481,983 1492,986 1517,989 1530,983 1545,990 1555,985 1570,960 1580,935 1590,912 1597,909 1612,905 1615,903 1630,906 1641,909 1655,883 1667,850 1680,814 1693,807 1707,835 1720,844 1732,849 1745,864 1770,880 1784,921 1797,956 1809,961', 'w');
  // An upper-case letter is an outlined bar.
  'r943 r933 r924 r913 r903 r892 r883 R880 R886 R897 R912 R928 c949 c977 c992 c975 c946 c934 C943 r978 r976 r927 r890 R881 c904 c943 c983 c995 c984 C985 r993 r1001 r1001 c1002 c1002 c989 c963 c935 c910 c889 c872 c857 c840 c821 c807 c802 C806 C816 C829 C844 C860 C876 C896 r920 r941 r959 r972 r979 r982 c982 c981 c978'.split(' ').forEach((b, i) => {
    const y = Number(b.slice(1));
    const key = b[0].toLowerCase();
    const x = barX(RIGHT, i);
    if (key === b[0]) rect(s, x, y, 10, 1007 - y, COLORS[key]);
    else add(s, 'rect', { x: x + .5, y: y + .5, width: 9, height: 1006 - y, fill: 'none', stroke: COLORS[key] });
  });
}
```
